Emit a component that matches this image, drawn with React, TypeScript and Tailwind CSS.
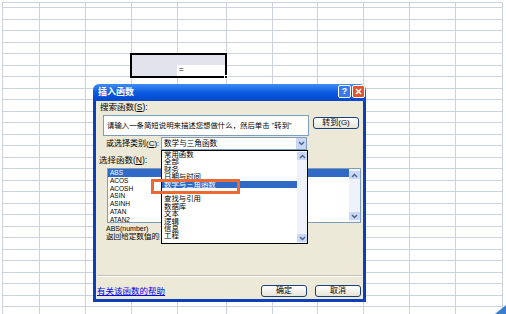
const cols = [37, 46, 46, 46, 49, 46, 45, 46, 46, 46, 47];
const rowCount = 28;

const categories = [
  "常用函数",
  "全部",
  "财务",
  "日期与时间",
  "数学与三角函数",
  "",
  "查找与引用",
  "数据库",
  "文本",
  "逻辑",
  "信息",
  "工程",
];

const functions = ["ABS", "ACOS", "ACOSH", "ASIN", "ASINH", "ATAN", "ATAN2"];

function Chevron({ up = false }: { up?: boolean }) {
  return (
    <svg width="7" height="5" viewBox="0 0 7 5">
      <path
        d={up ? "M1 4 L3.5 1.5 L6 4" : "M1 1 L3.5 3.5 L6 1"}
        fill="none"
        stroke="#4d6185"
        strokeWidth="1.4"
      />
    </svg>
  );
}

function XpButton({ label, className }: { label: string; className: string }) {
  return (
    <div
      className={
        "flex items-center justify-center rounded-[3px] border border-[#1c3f78] bg-gradient-to-b from-white to-[#e6e4da] text-[8px] leading-none text-black " +
        className
      }
    >
      {label}
    </div>
  );
}

function Scrollbar({ className }: { className: string }) {
  return (
    <div className={"flex flex-col justify-between bg-[#eef2fb] " + className}>
      <div className="flex h-[8px] items-center justify-center rounded-[1px] bg-[#c9d8f8]">
        <Chevron up />
      </div>
      <div className="flex h-[8px] items-center justify-center rounded-[1px] bg-[#c9d8f8]">
        <Chevron />
      </div>
    </div>
  );
}

export default function App() {
  return (
    <div className="relative h-[314px] w-[506px] overflow-hidden bg-white font-['Liberation_Sans','Noto_Sans_CJK_SC',sans-serif]">
      {/* sheet grid */}
      <div className="ml-[2px] mt-[2px] grid w-[501px] grid-cols-[37px_46px_46px_46px_49px_46px_45px_46px_46px_46px_47px] border-l border-t border-[#cdd3de]">
        {Array.from({ length: rowCount }).map((_, r) =>
          cols.map((_, c) => (
            <div
              key={r + "-" + c}
              className={
                "border-b border-r border-[#cdd3de] " +
                (r === 0 ? "h-[5px]" : "h-[11.5px]")
              }
            />
          ))
        )}
      </div>

      {/* selected range */}
      <div className="absolute left-[130px] top-[53px] flex h-[25px] w-[97px] flex-col border-2 border-black">
        <div className="h-[10px] bg-[#e3e3ee]" />
        <div className="flex flex-1">
          <div className="w-[45px] bg-[#e3e3ee]" />
          <div className="flex-1 bg-white pl-[2px] text-[8px] leading-[10px] text-black">=</div>
        </div>
        <div className="absolute -bottom-[3px] -right-[3px] h-[4px] w-[4px] border border-white bg-black" />
      </div>

      {/* dialog */}
      <div className="absolute left-[93px] top-[84px] flex h-[218px] w-[273px] flex-col">
        <div className="flex h-[17px] items-start justify-between rounded-t-[6px] bg-gradient-to-b from-[#3f8cf3] via-[#0a5ae2] to-[#0347c9] pl-[5px] pr-[1px] pt-[1px]">
          <span className="mt-[2px] text-[9px] font-bold leading-[10px] text-white">插入函数</span>
          <div className="flex gap-[1px]">
            <div className="flex h-[13px] w-[13px] items-center justify-center rounded-[2px] border border-white bg-[#3a78ee] text-[9px] font-bold leading-none text-white">
              ?
            </div>
            <div className="flex h-[13px] w-[13px] items-center justify-center rounded-[2px] border border-white bg-[#e0552c]">
              <svg width="7" height="7" viewBox="0 0 7 7">
                <path d="M1 1 L6 6 M6 1 L1 6" stroke="white" strokeWidth="1.6" />
              </svg>
            </div>
          </div>
        </div>

        <div className="relative flex flex-1 flex-col border-x-[3px] border-b-[3px] border-[#0d3fb8] bg-[#ece9d8] text-[8.5px] leading-[10px] text-black">
          <div className="ml-[4px] mt-[1px] h-[10px]">
            搜索函数(<span className="underline">S</span>):
          </div>

          <div className="mt-[3px] flex items-start">
            <div className="ml-[7px] h-[21px] w-[206px] overflow-hidden whitespace-nowrap border border-[#7f9db9] bg-white pl-[3px] pt-[5px] text-[7.4px] leading-[10px]">
              请输入一条简短说明来描述您想做什么，然后单击 "转到"
            </div>
            <XpButton label="转到(G)" className="ml-[4px] mt-[2px] h-[12px] w-[46px]" />
          </div>

          <div className="mt-[1px] flex h-[13px] items-center">
            <div className="ml-[10px] w-[55px] whitespace-nowrap text-[8px]">
              或选择类别(<span className="underline">C</span>):
            </div>
            <div className="flex h-[13px] w-[146px] items-center justify-between border border-[#7f9db9] bg-white pl-[2px]">
              <span className="text-[7.6px]">数学与三角函数</span>
              <div className="flex h-[11px] w-[10px] items-center justify-center bg-[#c9d8f8]">
                <Chevron />
              </div>
            </div>
          </div>

          <div className="ml-[3px] mt-[5px] h-[10px]">
            选择函数(<span className="underline">N</span>):
          </div>

          <div className="ml-[11px] mt-[3px] flex h-[55px] w-[254px] border border-[#7f9db9] bg-white">
            <div className="flex-1">
              {functions.map((f, i) => (
                <div
                  key={f}
                  className={
                    "h-[7.8px] pl-[2px] text-[6.5px] leading-[7.8px] " +
                    (i === 0 ? "bg-[#316ac5] text-white" : "text-black")
                  }
                >
                  {f}
                </div>
              ))}
            </div>
            <Scrollbar className="w-[11px] py-[2px]" />
          </div>

          <div className="ml-[10px] mt-[2px] h-[8px] text-[7px] leading-[8px]">ABS(number)</div>
          <div className="ml-[10px] h-[8px] w-[54px] overflow-hidden whitespace-nowrap text-[7.6px] leading-[8px]">
            返回给定数值的绝对值
          </div>

          <div className="mx-[1px] mt-[34px] h-[2px] border-b border-t border-b-white border-t-[#c5c2b2]" />

          <div className="mt-[8px] flex h-[12px] items-center">
            <span className="ml-[1px] text-[8.5px] text-[#0000ee] underline">有关该函数的帮助</span>
            <div className="ml-auto mr-[2px] flex gap-[8px]">
              <XpButton label="确定" className="h-[12px] w-[46px]" />
              <XpButton label="取消" className="h-[12px] w-[46px]" />
            </div>
          </div>

          {/* open category dropdown */}
          <div className="absolute left-[65px] top-[49px] flex h-[94px] w-[147px] border border-black bg-white">
            <div className="flex-1">
              {categories.map((c, i) => (
                <div
                  key={i}
                  className={
                    "h-[7.4px] overflow-hidden pl-[2px] text-[7.4px] leading-[7.4px] " +
                    (i === 4 ? "bg-[#316ac5] text-white" : "text-black")
                  }
                >
                  {c}
                </div>
              ))}
            </div>
            <Scrollbar className="w-[10px] py-[1px]" />
          </div>

          {/* highlight box */}
          <div className="absolute left-[55px] top-[78px] h-[15px] w-[89px] border-[3px] border-[#eb6a34]" />
        </div>
      </div>

      <svg className="absolute bottom-0 right-0" width="11" height="9" viewBox="0 0 11 9">
        <polygon points="11,0 11,9 0,9" fill="#3b7ccc" />
      </svg>
    </div>
  );
}
